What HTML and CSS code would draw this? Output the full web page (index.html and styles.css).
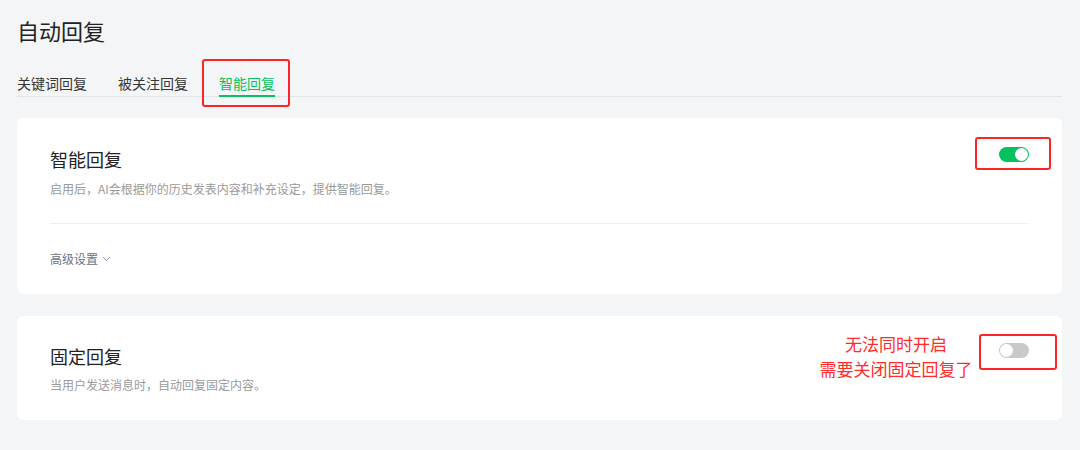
FILE: index.html
```html
<!DOCTYPE html>
<html lang="zh-CN">

<head>
    <meta charset="UTF-8">
    <meta name="viewport" content="width=device-width, initial-scale=1.0">
    <title>自动回复</title>
    <link rel="stylesheet" href="styles.css">
</head>

<body>
    <div class="page">
        <h1 class="page-title">自动回复</h1>

        <div class="tabs">
            <div class="tab">关键词回复</div>
            <div class="tab">被关注回复</div>
            <div class="tab active">智能回复<span class="mark mark-tab"></span></div>
        </div>

        <div class="card">
            <div class="card-head">
                <div class="card-info">
                    <h2 class="card-title">智能回复</h2>
                    <p class="card-desc">启用后，AI会根据你的历史发表内容和补充设定，提供智能回复。</p>
                </div>
                <div class="switch on"><span class="knob"></span></div>
            </div>
            <div class="card-foot">
                <a class="more">高级设置
                    <svg width="9" height="6" viewBox="0 0 9 6"><path d="M1 1l3.5 3.5L8 1" fill="none" stroke="#8a93a8" stroke-width="1"/></svg>
                </a>
            </div>
            <span class="mark mark-one"></span>
        </div>

        <div class="card second">
            <div class="card-head">
                <div class="card-info">
                    <h2 class="card-title">固定回复</h2>
                    <p class="card-desc">当用户发送消息时，自动回复固定内容。</p>
                </div>
                <div class="switch"><span class="knob"></span></div>
            </div>
            <div class="note">无法同时开启<br>需要关闭固定回复了</div>
            <span class="mark mark-two"></span>
        </div>
    </div>
</body>

</html>
```

FILE: styles.css
```css
* {
    margin: 0;
    padding: 0;
    box-sizing: border-box;
}

body {
    background: #f4f5f7;
    color: #353535;
    font-family: "Noto Sans CJK SC", "Noto Sans", sans-serif;
}

.page {
    padding: 15px 18px 0 17px;
}

.page-title {
    font-size: 22px;
    font-weight: normal;
    line-height: 30px;
    color: #222;
}

.tabs {
    display: flex;
    margin-top: 28px;
    border-bottom: 1px solid #e3e4e8;
}

.tab {
    position: relative;
    font-size: 14px;
    line-height: 20px;
    padding-bottom: 2px;
    margin-right: 31px;
    border-bottom: 2px solid transparent;
    margin-bottom: -1px;
    color: #353535;
}

.tab.active {
    color: #07c160;
    border-bottom-color: #07c160;
}

.card {
    position: relative;
    background: #fff;
    border-radius: 6px;
    margin-top: 21px;
    padding: 29px 33px 25px;
}

.card.second {
    margin-top: 22px;
    padding-top: 28px;
    padding-bottom: 26px;
}

.card-head {
    display: flex;
    justify-content: space-between;
    align-items: flex-start;
}

.card-title {
    font-size: 18px;
    font-weight: normal;
    line-height: 24px;
    color: #222;
}

.card-desc {
    font-size: 12px;
    line-height: 18px;
    color: #9a9a9a;
    margin-top: 9px;
}

.card.second .card-desc {
    margin-top: 8px;
}

.card-foot {
    margin-top: 25px;
    padding-top: 21px;
    border-top: 1px solid #eeeff1;
}

.more {
    display: inline-flex;
    align-items: center;
    gap: 4px;
    font-size: 12px;
    line-height: 18px;
    color: #6b7387;
}

.switch {
    position: relative;
    width: 30px;
    height: 15px;
    border-radius: 8px;
    background: #c9c9c9;
    margin-top: 0;
}

.switch .knob {
    position: absolute;
    top: 1px;
    left: 1px;
    width: 13px;
    height: 13px;
    border-radius: 50%;
    background: #fff;
}

.switch.on {
    background: #07c160;
}

.switch.on .knob {
    left: 16px;
}

.card.second .switch {
    margin-top: -1px;
}

.note {
    position: absolute;
    left: 789px;
    top: 15px;
    width: 180px;
    text-align: center;
    font-size: 17px;
    line-height: 25px;
    color: #ff2b2b;
}

.mark {
    position: absolute;
    border: 2px solid #ff2424;
    border-radius: 3px;
}

.mark-tab {
    left: -17px;
    top: -14px;
    width: 88px;
    height: 48px;
}

.mark-one {
    left: 958px;
    top: 19px;
    width: 76px;
    height: 33px;
}

.mark-two {
    left: 962px;
    top: 18px;
    width: 78px;
    height: 36px;
}
```
